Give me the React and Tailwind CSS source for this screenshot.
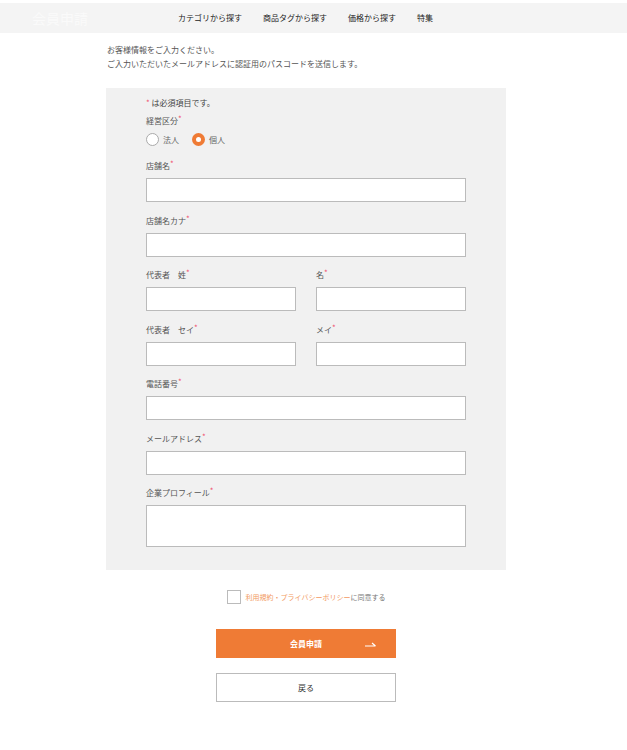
import React, { useState } from 'react';

const font = { fontFamily: '"Noto Sans CJK JP", "Noto Sans", sans-serif' };

function Req() {
  return <span className="text-[#f0506e] align-top text-[8px] leading-[8px]">*</span>;
}

function Label({ children }) {
  return (
    <div className="text-[8px] leading-[12px] text-[#555] mb-[6px]">
      {children}
      <Req />
    </div>
  );
}

function Field({ label, tall }) {
  return (
    <div>
      <Label>{label}</Label>
      {tall ? (
        <textarea className="block w-full h-[42px] bg-white border border-[#bbb] resize-none outline-none" />
      ) : (
        <input className="block w-full h-[24px] bg-white border border-[#bbb] outline-none" />
      )}
    </div>
  );
}

function Radio({ checked, label, onClick }) {
  return (
    <button type="button" onClick={onClick} className="flex items-center gap-[4px]">
      {checked ? (
        <span className="w-[13px] h-[13px] rounded-full bg-[#ef7b35] flex items-center justify-center">
          <span className="w-[5px] h-[5px] rounded-full bg-white" />
        </span>
      ) : (
        <span className="w-[13px] h-[13px] rounded-full bg-white border border-[#aaa]" />
      )}
      <span className="text-[8px] leading-[12px] text-[#666]">{label}</span>
    </button>
  );
}

export default function App() {
  const [kind, setKind] = useState('individual');
  const [agree, setAgree] = useState(false);

  return (
    <div className="min-h-screen bg-white" style={font}>
      <header className="mt-[3px] h-[30px] bg-[#f4f4f4] flex items-center">
        <div className="pl-[32px] text-[14px] leading-[20px] text-[#fafafa]">会員申請</div>
        <nav className="ml-[90px] flex items-center gap-[21px] text-[8px] leading-[12px] text-[#222]">
          <span>カテゴリから探す</span>
          <span>商品タグから探す</span>
          <span>価格から探す</span>
          <span>特集</span>
        </nav>
      </header>

      <main className="ml-[106px] w-[400px]">
        <div className="mt-[10px] pl-[1px] text-[8px] leading-[14px] text-[#555]">
          <p>お客様情報をご入力ください。</p>
          <p>ご入力いただいたメールアドレスに認証用のパスコードを送信します。</p>
        </div>

        <section className="mt-[17px] bg-[#f1f1f1] px-[40px] pt-[9px] pb-[23px]">
          <div className="text-[8px] leading-[12px] text-[#444]">
            <span className="text-[#f0506e]">*</span> は必須項目です。
          </div>
          <div className="mt-[6px]">
            <div className="text-[8px] leading-[12px] text-[#555]">
              経営区分<Req />
            </div>
            <div className="mt-[6px] flex items-center gap-[13px]">
              <Radio checked={kind === 'corp'} label="法人" onClick={() => setKind('corp')} />
              <Radio checked={kind === 'individual'} label="個人" onClick={() => setKind('individual')} />
            </div>
          </div>

          <div className="mt-[14px] flex flex-col gap-[12.5px]">
            <Field label="店舗名" />
            <Field label="店舗名カナ" />
            <div className="grid grid-cols-2 gap-x-[20px]">
              <Field label="代表者　姓" />
              <Field label="名" />
            </div>
            <div className="grid grid-cols-2 gap-x-[20px]">
              <Field label="代表者　セイ" />
              <Field label="メイ" />
            </div>
            <Field label="電話番号" />
            <Field label="メールアドレス" />
            <Field label="企業プロフィール" tall />
          </div>
        </section>

        <div className="mt-[20px] flex items-center justify-center gap-[5px]">
          <button
            type="button"
            onClick={() => setAgree(!agree)}
            className="w-[14px] h-[14px] bg-white border border-[#bbb] flex items-center justify-center"
          >
            {agree && <span className="w-[6px] h-[6px] bg-[#ef7b35]" />}
          </button>
          <span className="text-[7px] leading-[12px] text-[#777]">
            <span className="text-[#f29a62]">利用規約・プライバシーポリシー</span>に同意する
          </span>
        </div>

        <div className="mt-[25px] flex flex-col items-center gap-[15px]">
          <button
            type="button"
            className="relative w-[180px] h-[29px] bg-[#ef7b35] text-white text-[8px] font-bold flex items-center justify-center"
          >
            会員申請
            <svg
              className="absolute right-[20px] top-1/2 -translate-y-1/2"
              width="11"
              height="6"
              viewBox="0 0 11 6"
              fill="none"
              stroke="white"
              strokeWidth="1.2"
            >
              <path d="M0 5h10.5M7 2l3.5 3" />
            </svg>
          </button>
          <button
            type="button"
            className="w-[180px] h-[29px] bg-white border border-[#bbb] text-[#333] text-[8px] flex items-center justify-center"
          >
            戻る
          </button>
        </div>
      </main>
    </div>
  );
}
